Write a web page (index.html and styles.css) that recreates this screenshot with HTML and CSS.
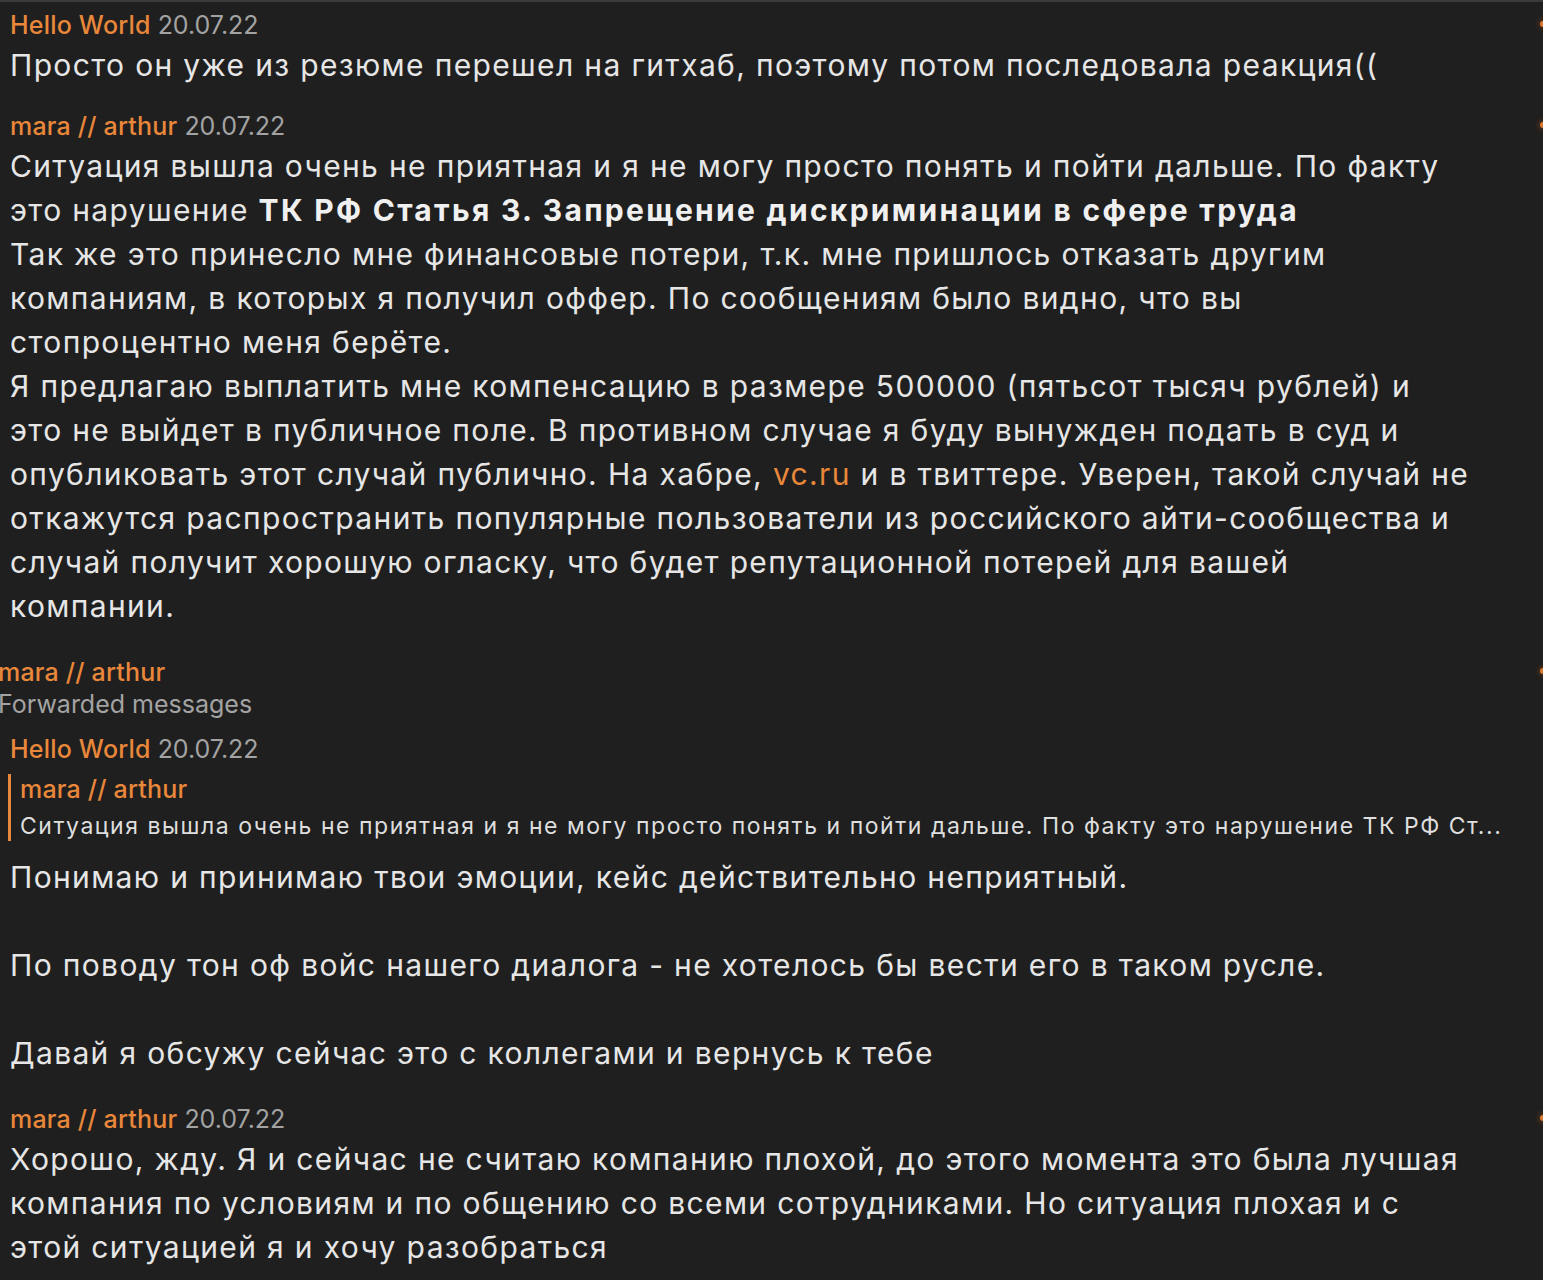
FILE: index.html
```html
<!DOCTYPE html>
<html lang="ru">
<head>
<meta charset="utf-8">
<link rel="stylesheet" href="styles.css">
</head>
<body>
<div class="chat">
  <div class="msg first">
    <div class="head"><span class="name">Hello World</span> <span class="date">20.07.22</span></div>
    <div class="text">Просто он уже из резюме перешел на гитхаб, поэтому потом последовала реакция((</div>
    <span class="dot"></span>
  </div>

  <div class="msg second">
    <div class="head"><span class="name">mara // arthur</span> <span class="date">20.07.22</span></div>
    <div class="text">Ситуация вышла очень не приятная и я не могу просто понять и пойти дальше. По факту<br>это нарушение <b>ТК РФ Статья 3. Запрещение дискриминации в сфере труда</b><br>Так же это принесло мне финансовые потери, т.к. мне пришлось отказать другим<br>компаниям, в которых я получил оффер. По сообщениям было видно, что вы<br>стопроцентно меня берёте.<br>Я предлагаю выплатить мне компенсацию в размере 500000 (пятьсот тысяч рублей) и<br>это не выйдет в публичное поле. В противном случае я буду вынужден подать в суд и<br>опубликовать этот случай публично. На хабре, <span class="link">vc.ru</span> и в твиттере. Уверен, такой случай не<br>откажутся распространить популярные пользователи из российского айти-сообщества и<br>случай получит хорошую огласку, что будет репутационной потерей для вашей<br>компании.</div>
    <span class="dot"></span>
  </div>

  <div class="msg fwd">
    <div class="fwd-head">
      <div class="name">mara // arthur</div>
      <div class="fwd-label">Forwarded messages</div>
    </div>
    <div class="inner">
      <div class="head"><span class="name">Hello World</span> <span class="date">20.07.22</span></div>
      <div class="quote">
        <div class="name">mara // arthur</div>
        <div class="quote-text">Ситуация вышла очень не приятная и я не могу просто понять и пойти дальше. По факту это нарушение ТК РФ Ст...</div>
      </div>
      <div class="text">Понимаю и принимаю твои эмоции, кейс действительно неприятный.<br><br>По поводу тон оф войс нашего диалога - не хотелось бы вести его в таком русле.<br><br>Давай я обсужу сейчас это с коллегами и вернусь к тебе</div>
    </div>
    <span class="dot"></span>
  </div>

  <div class="msg last">
    <div class="head"><span class="name">mara // arthur</span> <span class="date">20.07.22</span></div>
    <div class="text">Хорошо, жду. Я и сейчас не считаю компанию плохой, до этого момента это была лучшая<br>компания по условиям и по общению со всеми сотрудниками. Но ситуация плохая и с<br>этой ситуацией я и хочу разобраться</div>
    <span class="dot"></span>
  </div>
</div>
</body>
</html>
```

FILE: styles.css
```css
html, body {
  margin: 0;
  padding: 0;
  background: #1f1f1f;
}

body {
  font-family: Inter, "Noto Sans", "DejaVu Sans", sans-serif;
  color: #e4e4e4;
  height: 1280px;
  overflow: hidden;
  border-top: 2px solid #3b3b3b;
  box-sizing: border-box;
}

.chat {
  display: flex;
  flex-direction: column;
  padding-left: 10px;
  padding-top: 8px;
}

.msg {
  position: relative;
  display: flex;
  flex-direction: column;
  gap: 3px;
}

.msg.first {
  margin-top: 0;
}

.msg.second {
  margin-top: 24px;
}

.msg.fwd {
  margin-top: 29px;
}

.msg.last {
  margin-top: 29px;
}

.head {
  font-size: 25px;
  line-height: 30px;
  white-space: nowrap;
}

.name {
  color: #e9873a;
  font-size: 25px;
  line-height: 30px;
  font-weight: 500;
  letter-spacing: 0.2px;
}

.date {
  color: #a3a3a3;
}

.text {
  font-size: 30px;
  line-height: 44px;
  letter-spacing: 1.35px;
  white-space: nowrap;
  color: #e6e6e6;
}

.text b {
  font-weight: 700;
  color: #f0f0f0;
  letter-spacing: 2.3px;
}

.link {
  color: #e9873a;
}

.dot {
  position: absolute;
  right: -3px;
  top: 11px;
  width: 6px;
  height: 6px;
  border-radius: 50%;
  background: #d9782e;
  box-shadow: 0 0 5px 2px rgba(140, 70, 20, 0.45);
}

.fwd-head {
  margin-left: -12px;
  display: flex;
  flex-direction: column;
  gap: 2px;
}

.fwd-label {
  font-size: 25px;
  line-height: 30px;
  color: #a3a3a3;
}

.inner {
  display: flex;
  flex-direction: column;
  gap: 3px;
  margin-top: 12px;
}

.quote {
  border-left: 3px solid #e9873a;
  padding-left: 9px;
  margin-left: -2px;
  margin-top: 7px;
  margin-bottom: 11px;
  display: flex;
  flex-direction: column;
  gap: 7px;
}

.quote-text {
  font-size: 23px;
  line-height: 30px;
  letter-spacing: 1.53px;
  white-space: nowrap;
  color: #dedede;
}
```
